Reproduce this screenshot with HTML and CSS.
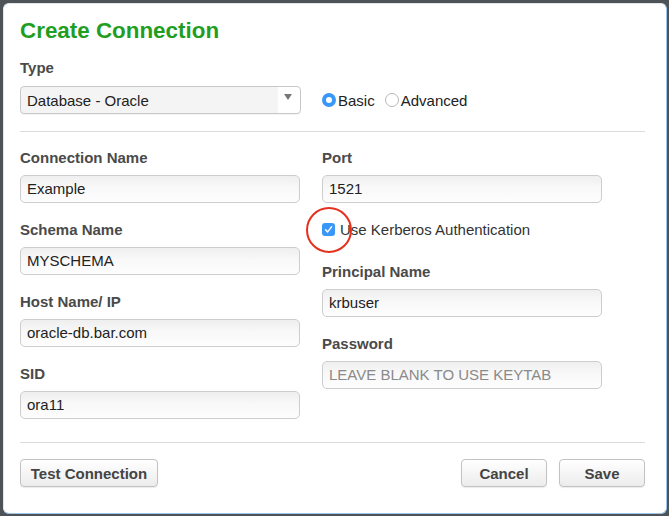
FILE: index.html
```html
<!DOCTYPE html>
<html>
<head>
<meta charset="utf-8">
<link rel="stylesheet" href="styles.css">
</head>
<body>
<div class="dialog">
  <h1 class="title">Create Connection</h1>
  <div class="label type-label">Type</div>
  <div class="type-row">
    <div class="select">
      <span class="select-text">Database - Oracle</span>
      <span class="arrow"></span>
    </div>
    <div class="radios">
      <span class="radio radio-on"></span><span class="radio-text">Basic</span>
      <span class="radio"></span><span class="radio-text">Advanced</span>
    </div>
  </div>
  <div class="rule rule-top"></div>
  <div class="columns">
    <div class="col">
      <div class="label">Connection Name</div>
      <div class="input">Example</div>
      <div class="label">Schema Name</div>
      <div class="input">MYSCHEMA</div>
      <div class="label">Host Name/ IP</div>
      <div class="input">oracle-db.bar.com</div>
      <div class="label">SID</div>
      <div class="input">ora11</div>
    </div>
    <div class="col">
      <div class="label">Port</div>
      <div class="input">1521</div>
      <div class="check-row">
        <span class="checkbox">
          <svg width="13" height="13" viewBox="0 0 13 13"><path d="M3.6 6.8 L5.6 8.9 L9.6 3.9" fill="none" stroke="#fff" stroke-width="1.5" stroke-linecap="round" stroke-linejoin="round"/></svg>
        </span>
        <span class="check-text">Use Kerberos Authentication</span>
        <span class="highlight"></span>
      </div>
      <div class="label">Principal Name</div>
      <div class="input">krbuser</div>
      <div class="label">Password</div>
      <div class="input placeholder">LEAVE BLANK TO USE KEYTAB</div>
    </div>
  </div>
  <div class="rule rule-bottom"></div>
  <div class="footer">
    <button class="btn btn-test">Test Connection</button>
    <div class="footer-right">
      <button class="btn">Cancel</button>
      <button class="btn">Save</button>
    </div>
  </div>
</div>
</body>
</html>
```

FILE: styles.css
```css
html, body {
  margin: 0;
  padding: 0;
}
body {
  background: #4e5358;
  padding: 3px 2px 2px 3px;
  width: 669px;
  height: 516px;
  box-sizing: border-box;
  font-family: "Liberation Sans", Arial, sans-serif;
  overflow: hidden;
}
.dialog {
  width: 664px;
  height: 511px;
  box-sizing: border-box;
  background: #fff;
  border: 1px solid #dfe6ee;
  border-right-color: #9fc3ea;
  border-bottom-color: #9fc3ea;
  border-radius: 6px;
  padding: 14px 21px 0 16px;
}
.title {
  margin: 0;
  font-size: 22.4px;
  line-height: 26px;
  font-weight: bold;
  color: #1f9e1f;
}
.label {
  font-size: 15px;
  line-height: 18px;
  font-weight: bold;
  color: #4a4a4a;
  margin-bottom: 8px;
}
.type-label {
  margin-top: 15px;
  margin-bottom: 9px;
}
.type-row {
  display: flex;
  align-items: center;
  gap: 21px;
}
.select {
  width: 281px;
  height: 28px;
  box-sizing: border-box;
  border: 1px solid #c8c8c8;
  border-radius: 4px;
  display: flex;
  align-items: center;
  position: relative;
  background: linear-gradient(to right, #f4f4f4 0, #f4f4f4 256px, #fff 258px);
  box-shadow: 0 1px 1px rgba(0,0,0,0.05);
}
.select-text {
  font-size: 15px;
  color: #222;
  padding-left: 6px;
}
.arrow {
  position: absolute;
  right: 8px;
  top: 7px;
  width: 0;
  height: 0;
  border-left: 4px solid transparent;
  border-right: 4px solid transparent;
  border-top: 6px solid #777;
}
.radios {
  display: flex;
  align-items: center;
  font-size: 15px;
  color: #222;
}
.radio {
  width: 14px;
  height: 14px;
  box-sizing: border-box;
  border-radius: 50%;
  border: 1px solid #b8b8b8;
  background: #fff;
  margin-right: 2px;
}
.radio-on {
  border: 4px solid #3a97f8;
  background: #fff;
}
.radio-text {
  margin-right: 10px;
}
.rule {
  height: 1px;
  background: #dcdcdc;
}
.rule-top {
  margin: 17px 0 17px;
}
.rule-bottom {
  margin: 23px 0 16px;
}
.columns {
  display: grid;
  grid-template-columns: 302px 1fr;
}
.input {
  width: 280px;
  height: 28px;
  box-sizing: border-box;
  border: 1px solid #cdcdcd;
  border-radius: 5px;
  background: linear-gradient(to bottom, #efefef 0, #f8f8f8 45%, #fdfdfd 100%);
  font-size: 15px;
  line-height: 26px;
  color: #222;
  padding-left: 6px;
  margin-bottom: 18px;
}
.col .input:last-child {
  margin-bottom: 0;
}
.placeholder {
  color: #8a8a8a;
}
.check-row {
  position: relative;
  display: flex;
  align-items: center;
  height: 28px;
  margin-top: -6px;
  margin-bottom: 20px;
}
.checkbox {
  width: 13px;
  height: 13px;
  border-radius: 3px;
  background: #3a97f8;
  display: flex;
  margin-right: 5px;
}
.check-text {
  font-size: 15px;
  color: #333;
}
.highlight {
  position: absolute;
  left: -16px;
  top: -8px;
  width: 46px;
  height: 46px;
  box-sizing: border-box;
  border: 2.5px solid #e6301e;
  border-radius: 50%;
}
.footer {
  display: flex;
  justify-content: space-between;
}
.footer-right {
  display: flex;
  gap: 12px;
}
.btn {
  height: 28px;
  min-width: 86px;
  box-sizing: border-box;
  padding: 0 10px;
  border: 1px solid #c2c2c2;
  border-radius: 4px;
  background: linear-gradient(to bottom, #fff, #ececec);
  box-shadow: 0 1px 1px rgba(0,0,0,0.08);
  font-family: "Liberation Sans", Arial, sans-serif;
  font-size: 15px;
  font-weight: bold;
  color: #444;
  white-space: nowrap;
}
.btn-test {
  width: 138px;
  padding: 0;
}
```
